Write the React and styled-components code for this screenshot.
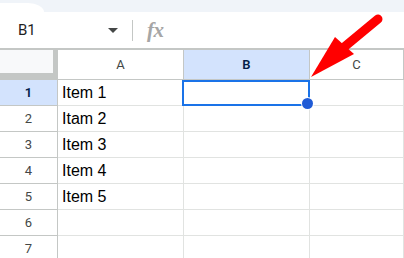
import React from "react";
import styled, { createGlobalStyle } from "styled-components";

const GlobalStyle = createGlobalStyle`
  html, body {
    margin: 0;
    padding: 0;
    background: #ffffff;
    overflow: hidden;
  }
  body {
    font-family: Roboto, "Liberation Sans", Arial, sans-serif;
  }
`;

// page
const Page = styled.div`
  position: relative;
  width: 404px;
  height: 258px;
  overflow: hidden;
  background: #fff;
`;

// the bottom edge of the toolbar above, with its rounded corner
const TopStrip = styled.div`
  position: relative;
  height: 12px;
  background: #f0f4f9;

  &::after {
    content: "";
    position: absolute;
    left: 0;
    top: 3px;
    width: 44px;
    height: 9px;
    background: #fff;
    border-top-right-radius: 16px 9px;
  }
`;

// formula bar
const FormulaBar = styled.div`
  display: flex;
  align-items: center;
  height: 38px;
  box-sizing: border-box;
  border-bottom: 2px solid #c4c7c5;
`;

const NameBox = styled.div`
  display: flex;
  align-items: center;
  justify-content: space-between;
  width: 132px;
  box-sizing: border-box;
  padding: 0 14px 0 18px;
  font-size: 15px;
  color: #1f1f1f;
`;

const Caret = styled.span`
  width: 0;
  height: 0;
  border-left: 5.5px solid transparent;
  border-right: 5.5px solid transparent;
  border-top: 5px solid #444746;
  margin-top: 1px;
`;

const Divider = styled.span`
  width: 1px;
  height: 21px;
  background: #c4c7c5;
`;

const Fx = styled.span`
  margin-left: 14px;
  font-family: "Liberation Serif", "DejaVu Serif", serif;
  font-style: italic;
  font-weight: bold;
  font-size: 21px;
  color: #a6a6a6;
  letter-spacing: -0.5px;
`;

// sheet
const Sheet = styled.div`
  display: grid;
  grid-template-columns: 58px 126px 126px 1fr;
  grid-auto-rows: 26px;
  grid-template-rows: 30px;
`;

const Corner = styled.div`
  box-sizing: border-box;
  background: #f8f9fa;
  border-right: 5px solid #c4c7c5;
  border-bottom: 7px solid #c4c7c5;
`;

const ColHeader = styled.div`
  box-sizing: border-box;
  display: flex;
  align-items: center;
  justify-content: center;
  border-right: 1px solid #c4c7c5;
  border-bottom: 1px solid #c4c7c5;
  font-size: 13px;
  background: ${(p) => (p.$active ? "#d3e3fd" : "#fff")};
  color: ${(p) => (p.$active ? "#041e49" : "#444746")};
  font-weight: ${(p) => (p.$active ? 600 : 400)};
`;

const RowHeader = styled.div`
  box-sizing: border-box;
  display: flex;
  align-items: center;
  justify-content: center;
  border-right: 1px solid #c4c7c5;
  border-bottom: 1px solid #c4c7c5;
  font-size: 13px;
  background: ${(p) => (p.$active ? "#d3e3fd" : "#fff")};
  color: ${(p) => (p.$active ? "#041e49" : "#444746")};
  font-weight: ${(p) => (p.$active ? 600 : 400)};
`;

const Cell = styled.div`
  position: relative;
  box-sizing: border-box;
  display: flex;
  align-items: center;
  padding-left: 4px;
  border-right: 1px solid #e1e3e1;
  border-bottom: 1px solid #e1e3e1;
  font-family: "Liberation Sans", Arial, sans-serif;
  font-size: 16px;
  color: #000;
  white-space: nowrap;
`;

const Selection = styled.div`
  position: absolute;
  left: -2px;
  top: 0;
  width: 128px;
  height: 26px;
  box-sizing: border-box;
  border: 2px solid #1a73e8;
  z-index: 2;
`;

const Handle = styled.span`
  position: absolute;
  right: -5px;
  bottom: -5px;
  width: 11px;
  height: 11px;
  border-radius: 50%;
  background: #1f5bd6;
  box-shadow: 0 0 0 1px #fff;
`;

const ArrowLayer = styled.svg`
  position: absolute;
  left: 0;
  top: 0;
  pointer-events: none;
  z-index: 5;
`;

const items = ["Item 1", "Itam 2", "Item 3", "Item 4", "Item 5", "", ""];

export default function App() {
  return (
    <>
      <GlobalStyle />
      <Page>
        <TopStrip />
        <FormulaBar>
          <NameBox>
            B1
            <Caret />
          </NameBox>
          <Divider />
          <Fx>fx</Fx>
        </FormulaBar>
        <Sheet>
          <Corner />
          <ColHeader>A</ColHeader>
          <ColHeader $active>B</ColHeader>
          <ColHeader>C</ColHeader>
          {items.map((text, i) => (
            <React.Fragment key={i}>
              <RowHeader $active={i === 0}>{i + 1}</RowHeader>
              <Cell>{text}</Cell>
              <Cell>
                {i === 0 && (
                  <Selection>
                    <Handle />
                  </Selection>
                )}
              </Cell>
              <Cell />
            </React.Fragment>
          ))}
        </Sheet>
        <ArrowLayer width="404" height="258" viewBox="0 0 404 258">
          <line x1="378" y1="19" x2="343" y2="48" stroke="#ff0000" strokeWidth="9" strokeLinecap="round" />
          <polygon points="311,77 335,37 354,54" fill="#ff0000" />
        </ArrowLayer>
      </Page>
    </>
  );
}
